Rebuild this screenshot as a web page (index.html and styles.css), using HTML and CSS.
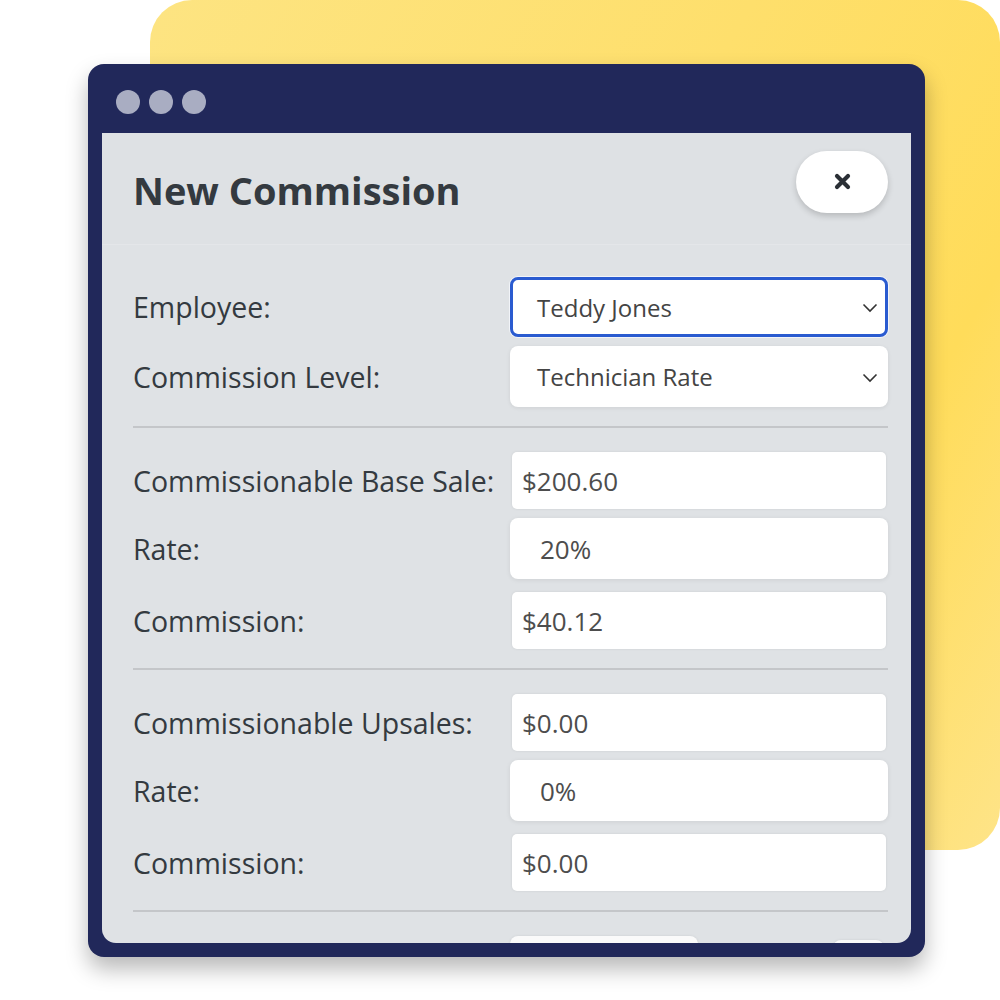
FILE: index.html
```html
<!DOCTYPE html>
<html>
<head>
<meta charset="utf-8">
<link rel="stylesheet" href="styles.css">
</head>
<body>
<div class="stage">
  <div class="blob"></div>
  <div class="window">
    <div class="titlebar">
      <span class="dot"></span><span class="dot"></span><span class="dot"></span>
    </div>
    <div class="panel">
      <div class="header">
        <h1 class="title">New Commission</h1>
        <button class="close" aria-label="Close">
          <svg width="17" height="17" viewBox="0 0 17 17"><path d="M3 3 L14 14 M14 3 L3 14" stroke="#2b3036" stroke-width="4.2" stroke-linecap="round"/></svg>
        </button>
      </div>
      <div class="body">
        <div class="row">
          <span class="label">Employee:</span>
          <div class="select focused"><span>Teddy Jones</span>
            <svg class="chev" width="16" height="10" viewBox="0 0 16 10"><path d="M1.5 1.5 L8 8 L14.5 1.5" fill="none" stroke="#333" stroke-width="1.6"/></svg>
          </div>
        </div>
        <div class="row gap9">
          <span class="label">Commission Level:</span>
          <div class="select tall"><span>Technician Rate</span>
            <svg class="chev" width="16" height="10" viewBox="0 0 16 10"><path d="M1.5 1.5 L8 8 L14.5 1.5" fill="none" stroke="#333" stroke-width="1.6"/></svg>
          </div>
        </div>
        <hr class="sep">
        <div class="row">
          <span class="label">Commissionable Base Sale:</span>
          <div class="field">$200.60</div>
        </div>
        <div class="row rate-row">
          <span class="label">Rate:</span>
          <div class="field rate">20%</div>
        </div>
        <div class="row">
          <span class="label">Commission:</span>
          <div class="field">$40.12</div>
        </div>
        <hr class="sep">
        <div class="row">
          <span class="label">Commissionable Upsales:</span>
          <div class="field">$0.00</div>
        </div>
        <div class="row rate-row">
          <span class="label">Rate:</span>
          <div class="field rate">0%</div>
        </div>
        <div class="row">
          <span class="label">Commission:</span>
          <div class="field">$0.00</div>
        </div>
        <hr class="sep">
        <div class="row">
          <span class="label"></span>
          <div class="partial">
            <div class="pbox wide"></div>
            <div class="pbox small"></div>
          </div>
        </div>
      </div>
    </div>
  </div>
</div>
</body>
</html>
```

FILE: styles.css
```css
html, body {
  margin: 0;
  padding: 0;
  background: #ffffff;
  font-family: "Open Sans", "Noto Sans", sans-serif;
}
.stage {
  position: relative;
  width: 1000px;
  height: 1000px;
  overflow: hidden;
}
.blob {
  position: absolute;
  left: 150px;
  top: 0;
  width: 850px;
  height: 850px;
  border-radius: 42px;
  background: linear-gradient(120deg, #fde482 0%, #fedf6c 45%, #ffdc5a 75%, #fee488 100%);
}
.window {
  position: absolute;
  left: 88px;
  top: 64px;
  width: 837px;
  height: 893px;
  box-sizing: border-box;
  background: #21285a;
  border-radius: 16px;
  padding: 0 14px 14px;
  display: flex;
  flex-direction: column;
  box-shadow: 0 12px 22px rgba(0, 0, 0, 0.28);
}
.titlebar {
  height: 69px;
  flex-shrink: 0;
  display: flex;
  align-items: center;
  gap: 9px;
  padding-left: 14px;
  padding-top: 7px;
  box-sizing: border-box;
}
.dot {
  width: 24px;
  height: 24px;
  border-radius: 50%;
  background: #a9adc2;
}
.panel {
  flex: 1;
  min-height: 0;
  background: #dfe2e5;
  border-radius: 0 0 14px 14px;
  overflow: hidden;
  display: flex;
  flex-direction: column;
}
.header {
  height: 112px;
  flex-shrink: 0;
  box-sizing: border-box;
  display: flex;
  align-items: center;
  justify-content: space-between;
  padding: 0 23px 0 31px;
  border-bottom: 1px solid #e4e6e9;
  background: #dee1e4;
}
.title {
  margin: 0;
  font-size: 38px;
  font-weight: 700;
  color: #343a40;
  padding-top: 2px;
}
.close {
  width: 92px;
  height: 62px;
  border: none;
  border-radius: 31px;
  background: #ffffff;
  box-shadow: 0 3px 6px rgba(0, 0, 0, 0.18);
  display: flex;
  align-items: center;
  justify-content: center;
  margin-top: -14px;
  padding: 0;
}
.body {
  flex-shrink: 0;
  padding: 32px 23px 0 31px;
  display: flex;
  flex-direction: column;
}
.row {
  display: grid;
  grid-template-columns: 377px 1fr;
  align-items: center;
}
.gap9 { margin-top: 9px; }
.rate-row { margin: 9px 0 13px; }
.label {
  font-size: 28.5px;
  color: #343a40;
}
.select {
  height: 60px;
  box-sizing: border-box;
  background: #ffffff;
  border-radius: 8px;
  display: flex;
  align-items: center;
  justify-content: space-between;
  padding: 0 10px 0 27px;
  font-size: 24px;
  color: #444;
  box-shadow: 0 1px 4px rgba(0, 0, 0, 0.08);
}
.select.tall { height: 61px; }
.select.focused {
  border: 3px solid #2a5bd0;
  padding-left: 24px;
  padding-right: 7px;
  box-shadow: 0 0 0 1px #f2f4f8;
}
.chev { margin-top: 2px; }
.sep {
  border: none;
  height: 2px;
  background: #c4c6c9;
  margin: 19px 0 24px;
}
.field {
  height: 57px;
  margin: 0 2px;
  box-sizing: border-box;
  background: #ffffff;
  border-radius: 5px;
  display: flex;
  align-items: center;
  padding-left: 10px;
  font-size: 26px;
  color: #4d4d4d;
  box-shadow: 0 0 3px rgba(0, 0, 0, 0.08);
}
.field.rate {
  height: 61px;
  margin: 0;
  border-radius: 8px;
  padding-left: 30px;
  box-shadow: 0 1px 5px rgba(0, 0, 0, 0.08);
}
.partial {
  display: flex;
  justify-content: space-between;
  align-items: flex-start;
  height: 60px;
}
.pbox {
  background: #fafafa;
  border-radius: 8px;
  height: 60px;
  box-shadow: 0 0 3px rgba(0, 0, 0, 0.08);
}
.pbox.wide { width: 188px; }
.pbox.small { width: 51px; margin-top: 4px; margin-right: 4px; }
```
